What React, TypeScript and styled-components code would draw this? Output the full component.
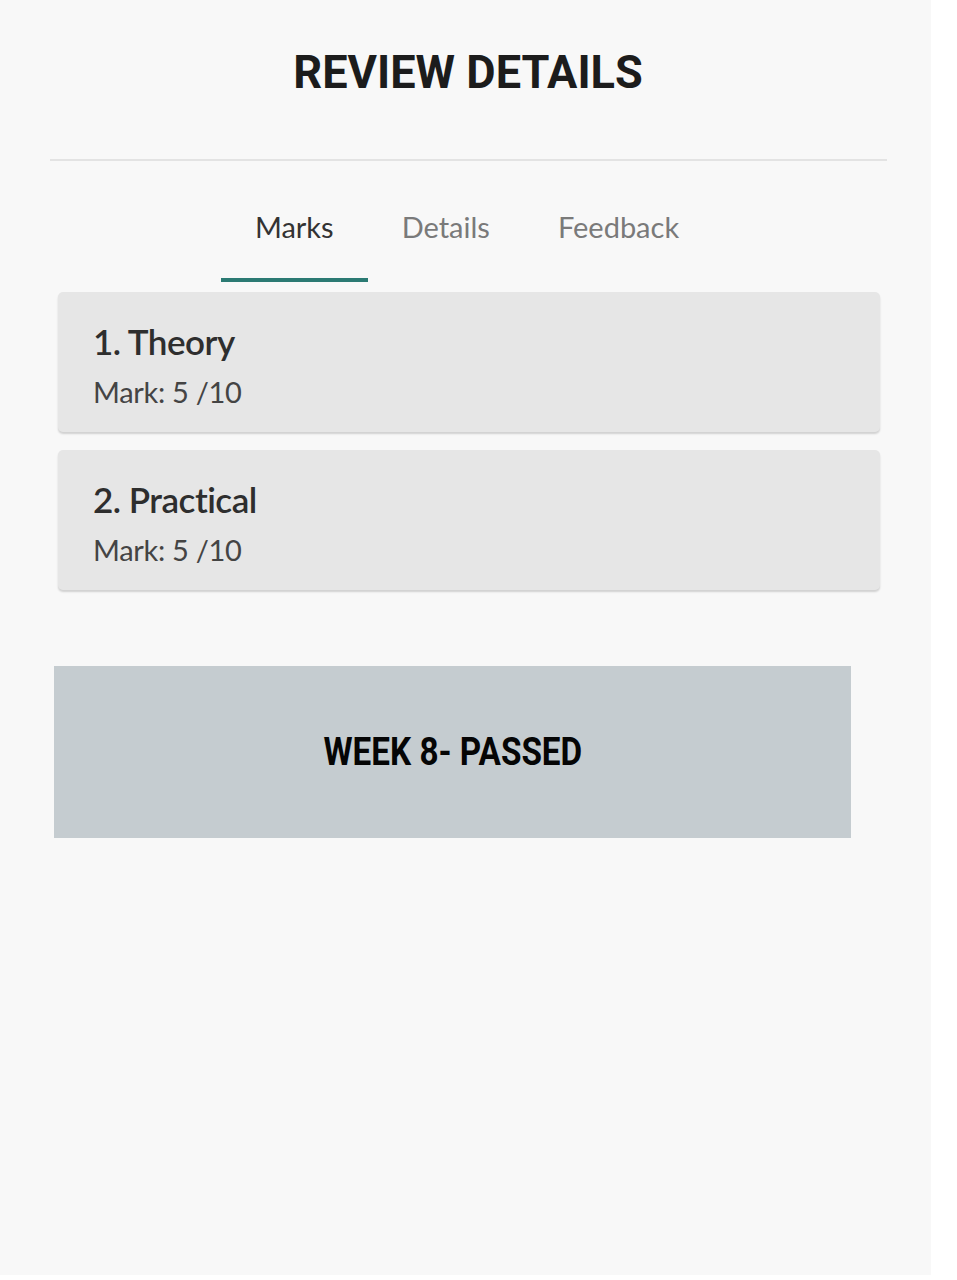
import React from "react";
import styled, { createGlobalStyle } from "styled-components";

const Global = createGlobalStyle`
  html, body { margin: 0; padding: 0; background: #ffffff; }
  * { box-sizing: border-box; }
`;

const Page = styled.div`
  width: 931px;
  height: 1275px;
  background: #f8f8f8;
  padding: 0 0 0 50px;
  display: flex;
  flex-direction: column;
`;

const Column = styled.div`
  width: 837px;
  display: flex;
  flex-direction: column;
`;

const Header = styled.header`
  height: 161px;
  display: flex;
  justify-content: center;
  align-items: flex-start;
  padding-top: 45px;
  border-bottom: 2px solid #e3e3e3;
`;

const Title = styled.h1`
  margin: 0;
  font-family: Roboto, "Liberation Sans", sans-serif;
  font-weight: 700;
  font-size: 47px;
  line-height: 54px;
  color: #1c1c1c;
  display: inline-block;
  transform: scaleX(0.96);
`;

const TabBar = styled.nav`
  display: flex;
  justify-content: center;
  margin: 37px 3px 0 0;
`;

const Tab = styled.button<{ $active?: boolean }>`
  border: none;
  background: transparent;
  padding: 0 34px 24px;
  height: 84px;
  font-family: Lato, "Open Sans", sans-serif;
  font-size: 29px;
  color: ${(p) => (p.$active ? "#333333" : "#7a7a7a")};
  border-bottom: 4px solid ${(p) => (p.$active ? "#2b7a73" : "transparent")};
  cursor: pointer;
`;

const Cards = styled.div`
  display: flex;
  flex-direction: column;
  gap: 18px;
  margin: 10px 7px 0 8px;
`;

const Card = styled.div`
  height: 140px;
  background: #e6e6e6;
  border-radius: 5px;
  box-shadow: 0 2px 2px rgba(0, 0, 0, 0.16);
  padding: 28px 35px;
  display: flex;
  flex-direction: column;
  gap: 12px;
`;

const CardTitle = styled.div`
  font-family: Lato, "Open Sans", sans-serif;
  font-weight: 600;
  font-size: 35px;
  line-height: 42px;
  color: #2e2e2e;
  letter-spacing: -0.5px;
`;

const CardMark = styled.div`
  font-family: Lato, "Open Sans", sans-serif;
  font-size: 29px;
  line-height: 36px;
  color: #444444;
  letter-spacing: -0.3px;
`;

const Banner = styled.div`
  margin: 76px 0 0 4px;
  width: 797px;
  height: 172px;
  background: #c5ccd0;
  display: flex;
  align-items: center;
  justify-content: center;
`;

const BannerText = styled.span`
  font-family: Roboto, "Liberation Sans", sans-serif;
  font-weight: 700;
  font-size: 38px;
  color: #050505;
  display: inline-block;
  transform: scaleX(0.875);
`;

const marks = [
  { title: "1. Theory", mark: "Mark: 5 /10" },
  { title: "2. Practical", mark: "Mark: 5 /10" },
];

export default function App() {
  return (
    <>
      <Global />
      <Page>
        <Column>
          <Header>
            <Title>REVIEW DETAILS</Title>
          </Header>
          <TabBar>
            <Tab $active>Marks</Tab>
            <Tab>Details</Tab>
            <Tab>Feedback</Tab>
          </TabBar>
          <Cards>
            {marks.map((m) => (
              <Card key={m.title}>
                <CardTitle>{m.title}</CardTitle>
                <CardMark>{m.mark}</CardMark>
              </Card>
            ))}
          </Cards>
          <Banner>
            <BannerText>WEEK 8- PASSED</BannerText>
          </Banner>
        </Column>
      </Page>
    </>
  );
}
